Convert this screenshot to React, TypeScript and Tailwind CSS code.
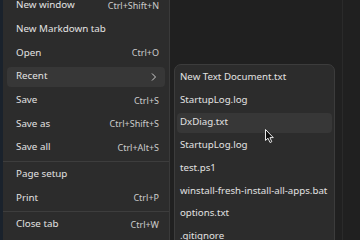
import React from 'react';

type Item = { label: string; shortcut?: string; sub?: boolean; active?: boolean } | 'sep';

const mainItems: Item[] = [
  { label: 'New window', shortcut: 'Ctrl+Shift+N' },
  { label: 'New Markdown tab' },
  { label: 'Open', shortcut: 'Ctrl+O' },
  { label: 'Recent', sub: true, active: true },
  { label: 'Save', shortcut: 'Ctrl+S' },
  { label: 'Save as', shortcut: 'Ctrl+Shift+S' },
  { label: 'Save all', shortcut: 'Ctrl+Alt+S' },
  'sep',
  { label: 'Page setup' },
  { label: 'Print', shortcut: 'Ctrl+P' },
  'sep',
  { label: 'Close tab', shortcut: 'Ctrl+W' },
];

const recentFiles = [
  'New Text Document.txt',
  'StartupLog.log',
  'DxDiag.txt',
  'StartupLog.log',
  'test.ps1',
  'winstall-fresh-install-all-apps.bat',
  'options.txt',
  '.gitignore',
];

const font = { fontFamily: '"Noto Sans", "Open Sans", sans-serif' };

const App: React.FC = () => {
  return (
    <div className="relative flex w-[360px] h-[240px] overflow-hidden bg-[#202020]" style={font}>
      {/* window edge on the left */}
      <div className="w-[3px] bg-[#1a222c]" />

      {/* main file menu */}
      <div className="w-[167px] h-full bg-[#2c2c2c] border-r border-[#3a3a3a] flex flex-col">
        <div className="-mt-[6px] flex flex-col">
          {mainItems.map((it, i) =>
            it === 'sep' ? (
              <div key={i} className="h-[3px] flex items-center">
                <div className="h-px w-full bg-[#3d3d3d]" />
              </div>
            ) : (
              <div key={i} className="h-[23.67px] flex items-center">
                <div
                  className={`flex-1 mx-[4px] h-[20px] rounded-[4px] flex items-center justify-between pl-[9px] pr-[6px] ${
                    it.active ? 'bg-[#373737]' : ''
                  }`}
                >
                  <span className="text-[9.8px] text-[#e2e2e2]">{it.label}</span>
                  {it.shortcut && <span className="text-[9px] text-[#cdcdcd]">{it.shortcut}</span>}
                  {it.sub && (
                    <svg width="8" height="10" viewBox="0 0 8 10" className="mr-[1px]">
                      <path d="M2 1.5 L5.5 5 L2 8.5" fill="none" stroke="#cfcfcf" strokeWidth="1" />
                    </svg>
                  )}
                </div>
              </div>
            )
          )}
        </div>
      </div>

      {/* window behind, right edge */}
      <div className="flex-1" />
      <div className="w-[1px] bg-[#2a2a2a] mr-[17px]" />

      {/* recent flyout */}
      <div className="absolute left-[174px] top-[64px] w-[161px] h-[200px] rounded-[7px] bg-[#2c2c2c] border border-[#3c3c3c] pt-[1px] flex flex-col">
        {recentFiles.map((f, i) => (
          <div key={i} className="h-[22.7px] flex items-center">
            <div
              className={`flex-1 mx-[2px] h-[20px] rounded-[4px] flex items-center pl-[3px] ${
                i === 2 ? 'bg-[#373737]' : ''
              }`}
            >
              <span className="text-[9.7px] text-[#e2e2e2] whitespace-nowrap">{f}</span>
            </div>
          </div>
        ))}
      </div>

      {/* mouse pointer */}
      <svg className="absolute left-[265px] top-[129px]" width="10" height="15" viewBox="0 0 10 15">
        <path d="M0.5 0.5 L0.5 11.5 L3 9.2 L5 13.5 L6.8 12.7 L4.9 8.6 L8.3 8.6 Z" fill="#111" stroke="#e8e8e8" strokeWidth="1" />
      </svg>
    </div>
  );
};

export default App;
